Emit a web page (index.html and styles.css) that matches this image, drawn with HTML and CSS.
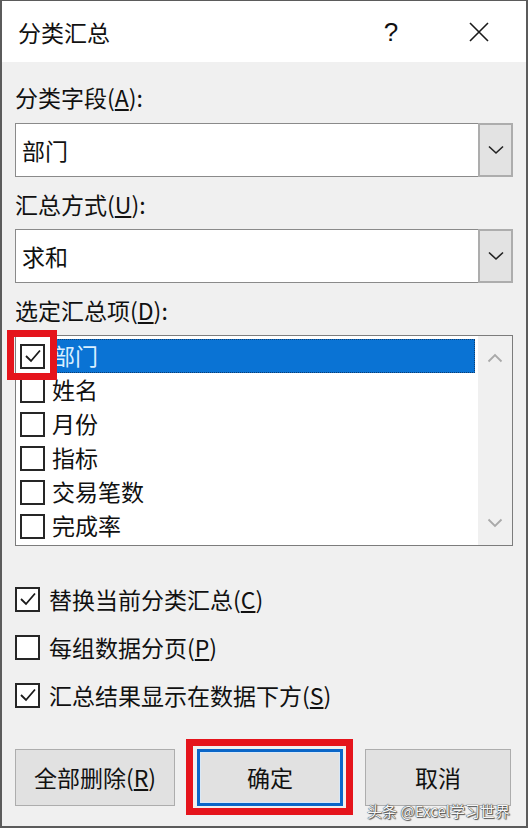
FILE: index.html
```html
<!DOCTYPE html>
<html lang="zh-CN">
<head>
<meta charset="utf-8">
<title>分类汇总</title>
<link rel="stylesheet" href="styles.css">
</head>
<body>
<div class="dialog">
  <div class="titlebar">
    <span class="title">分类汇总</span>
    <span class="help">?</span>
    <span class="close">
      <svg width="22" height="22" viewBox="0 0 22 22"><path d="M2 2 L20 20 M20 2 L2 20" stroke="#1a1a1a" stroke-width="1.6" fill="none"/></svg>
    </span>
  </div>
  <div class="content">
    <div class="label l1">分类字段(<u>A</u>):</div>
    <div class="select">
      <span class="value">部门</span>
      <span class="drop"><svg width="16" height="10" viewBox="0 0 16 10"><path d="M1 1.5 L8 8 L15 1.5" stroke="#222" stroke-width="1.6" fill="none"/></svg></span>
    </div>
    <div class="label">汇总方式(<u>U</u>):</div>
    <div class="select">
      <span class="value">求和</span>
      <span class="drop"><svg width="16" height="10" viewBox="0 0 16 10"><path d="M1 1.5 L8 8 L15 1.5" stroke="#222" stroke-width="1.6" fill="none"/></svg></span>
    </div>
    <div class="label">选定汇总项(<u>D</u>):</div>
    <div class="list">
      <div class="items">
        <div class="item">
          <span class="cb"><svg width="20" height="20" viewBox="0 0 20 20"><path d="M3 10 L8 15 L17 4.5" stroke="#1a1a1a" stroke-width="1.8" fill="none"/></svg></span>
          <span class="text selected">部门</span>
        </div>
        <div class="item"><span class="cb"></span><span class="text">姓名</span></div>
        <div class="item"><span class="cb"></span><span class="text">月份</span></div>
        <div class="item"><span class="cb"></span><span class="text">指标</span></div>
        <div class="item"><span class="cb"></span><span class="text">交易笔数</span></div>
        <div class="item"><span class="cb"></span><span class="text">完成率</span></div>
      </div>
      <div class="scroll">
        <svg width="16" height="10" viewBox="0 0 16 10"><path d="M1.5 8.5 L8 2 L14.5 8.5" stroke="#a9a9a9" stroke-width="1.8" fill="none"/></svg>
        <svg width="16" height="10" viewBox="0 0 16 10"><path d="M1.5 1.5 L8 8 L14.5 1.5" stroke="#a9a9a9" stroke-width="1.8" fill="none"/></svg>
      </div>
      <div class="mark-cb"></div>
    </div>
    <div class="opts">
      <div class="opt">
        <span class="cb"><svg width="20" height="20" viewBox="0 0 20 20"><path d="M3 10 L8 15 L17 4.5" stroke="#1a1a1a" stroke-width="1.8" fill="none"/></svg></span>
        <span class="otext">替换当前分类汇总(<u>C</u>)</span>
      </div>
      <div class="opt">
        <span class="cb"></span>
        <span class="otext">每组数据分页(<u>P</u>)</span>
      </div>
      <div class="opt">
        <span class="cb"><svg width="20" height="20" viewBox="0 0 20 20"><path d="M3 10 L8 15 L17 4.5" stroke="#1a1a1a" stroke-width="1.8" fill="none"/></svg></span>
        <span class="otext">汇总结果显示在数据下方(<u>S</u>)</span>
      </div>
    </div>
    <div class="buttons">
      <div class="btn b-del">全部删除(<u>R</u>)</div>
      <div class="btn b-ok">确定</div>
      <div class="btn b-cancel">取消</div>
    </div>
  </div>
  <div class="watermark">头条 @Excel学习世界</div>
</div>
</body>
</html>
```
FILE: styles.css
```css
* { box-sizing: border-box; }
html, body { margin: 0; padding: 0; }
body {
  width: 528px;
  height: 828px;
  font-family: "Noto Sans CJK SC", "Noto Sans", sans-serif;
  color: #111;
  background: #f0f0f0;
}
.dialog {
  width: 528px;
  height: 828px;
  border-style: solid;
  border-color: #5b5b5b;
  border-width: 1px 2px 2px 2px;
  background: #f0f0f0;
  position: relative;
  overflow: hidden;
}
.titlebar {
  height: 61px;
  background: #fff;
  display: flex;
  align-items: center;
  padding-left: 16px;
}
.title {
  font-size: 23px;
  line-height: 30px;
  flex: 1;
}
.help {
  font-family: "Liberation Sans", sans-serif;
  font-size: 26px;
  line-height: 30px;
  width: 20px;
  margin-right: 67px;
  text-align: center;
}
.close {
  width: 22px;
  height: 22px;
  margin-right: 36px;
  display: flex;
}
.content {
  padding: 0 13px;
}
.label {
  font-size: 23px;
  line-height: 34px;
  height: 34px;
  margin-top: 10px;
  margin-bottom: 8px;
}
.label.l1 { margin-top: 18px; margin-bottom: 9px; }
u { text-underline-offset: 2px; text-decoration-thickness: 1.5px; }
.select {
  height: 54px;
  width: 498px;
  background: #fff;
  border: 1px solid #8a8a8a;
  display: flex;
  align-items: stretch;
}
.select .value {
  flex: 1;
  font-size: 23px;
  line-height: 52px;
  padding-left: 6px;
}
.select .drop {
  width: 35px;
  background: #e3e3e3;
  border: 2px solid #adadad;
  margin: -1px -1px -1px 0;
  display: flex;
  align-items: center;
  justify-content: center;
}
.list {
  position: relative;
  width: 498px;
  height: 211px;
  margin-top: 7px;
  background: #fff;
  border: 1px solid #7c7c7c;
  display: flex;
}
.items {
  flex: 1;
  padding: 3px 3px 0 4px;
}
.item {
  height: 34px;
  display: flex;
  align-items: center;
}
.cb {
  width: 25px;
  height: 25px;
  border: 2px solid #262626;
  background: #fff;
  display: flex;
  align-items: center;
  justify-content: center;
  flex: none;
}
.item .text {
  margin-left: 6px;
  flex: 1;
  height: 34px;
  font-size: 23px;
  line-height: 33px;
  padding-left: 1px;
}
.item .text.selected {
  background: #0a73d4;
  color: #d9efff;
  outline: 1px dotted #0d3d70;
  outline-offset: -1px;
}
.scroll {
  width: 34px;
  background: #f0f0f0;
  display: flex;
  flex-direction: column;
  justify-content: space-between;
  align-items: center;
  padding: 17px 0 17px 0;
}
.mark-cb {
  position: absolute;
  left: -9px;
  top: -6px;
  width: 50px;
  height: 50px;
  border: 7px solid #e5141c;
}
.opts {
  margin-top: 29px;
}
.opt {
  height: 48px;
  display: flex;
  align-items: center;
}
.otext {
  margin-left: 9px;
  font-size: 23px;
  line-height: 30px;
}
.buttons {
  display: flex;
  gap: 22px;
  margin-top: 30px;
}
.btn {
  height: 57px;
  background: #e1e1e1;
  border: 1px solid #adadad;
  font-size: 23px;
  line-height: 55px;
  text-align: center;
  position: relative;
}
.b-del { width: 160px; }
.b-ok {
  width: 146px;
  border: 3px solid #0a66c8;
  line-height: 51px;
  box-shadow: inset 0 0 0 1px #d8e8f7;
}
.b-ok::before {
  content: "";
  position: absolute;
  left: -14px;
  top: -13px;
  right: -13px;
  bottom: -12px;
  border: 7px solid #e5141c;
}
.b-cancel { width: 146px; }
.watermark {
  position: absolute;
  right: 16px;
  top: 800px;
  font-size: 15px;
  line-height: 20px;
  color: #f6f6f6;
  text-shadow: 0 0 1px #333, 0 0 1px #333, 1px 1px 1px #555;
}
```
